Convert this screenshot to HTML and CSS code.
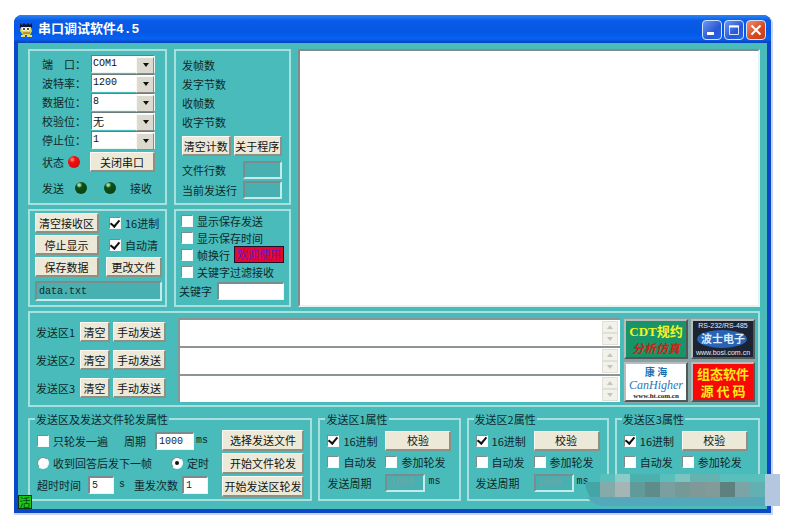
FILE: index.html
```html
<!DOCTYPE html>
<html lang="zh-CN">
<head>
<meta charset="utf-8">
<title>串口调试软件4.5</title>
<link rel="stylesheet" href="styles.css">
</head>
<body>
<main class="window">
  <header class="titlebar">
    <svg class="app-icon" width="14" height="16" viewBox="0 0 14 16" aria-hidden="true">
      <path d="M1 1l2 2 2-2 2 2 2-2 2 2 2-2v5H1z" fill="#10143c"/>
      <path d="M2 5h10l1 4-2 4H4L1 9z" fill="#d8d848"/>
      <circle cx="5" cy="7" r="2" fill="#fff"/><circle cx="9" cy="7" r="2" fill="#fff"/>
      <circle cx="5" cy="7" r="1" fill="#111"/><circle cx="9" cy="7" r="1" fill="#111"/>
      <path d="M4 11h7" stroke="#b04a18" stroke-width="1"/>
      <path d="M2 14h4M8 14h5" stroke="#e8e060" stroke-width="2"/>
    </svg>
    <h1 class="title">串口调试软件4.5</h1>
    <button class="cap" aria-label="最小化"><svg width="18" height="18" viewBox="0 0 18 18"><path d="M4 12.5h7" stroke="#fff" stroke-width="3"/></svg></button>
    <button class="cap" aria-label="最大化"><svg width="18" height="18" viewBox="0 0 18 18"><path d="M4.5 5h9v8.5h-9z" fill="none" stroke="#d4e2ff" stroke-width="1"/><path d="M4 5.5h10" stroke="#fff" stroke-width="2"/></svg></button>
    <button class="cap cap-close" aria-label="关闭"><svg width="18" height="18" viewBox="0 0 18 18"><path d="M4.5 4.5l9 9M13.5 4.5l-9 9" stroke="#fff" stroke-width="2"/></svg></button>
  </header>

  <div class="client">
    <div class="upper">
      <section class="panel port">
        <div class="port-grid">
          <label for="port">端　口：</label><span class="combo"><select id="port"><option>COM1</option></select></span>
          <label for="baud">波特率：</label><span class="combo"><select id="baud"><option>1200</option></select></span>
          <label for="data">数据位：</label><span class="combo"><select id="data"><option>8</option></select></span>
          <label for="parity">校验位：</label><span class="combo"><select id="parity" class="cjk"><option>无</option></select></span>
          <label for="stop">停止位：</label><span class="combo"><select id="stop"><option>1</option></select></span>
        </div>
        <div class="status"><span>状态</span><i class="led led-red"></i><button class="btn">关闭串口</button></div>
        <div class="lamps"><span>发送</span><i class="led"></i><i class="led"></i><span>接收</span></div>
      </section>

      <section class="panel counts">
        <div class="count">发帧数</div>
        <div class="count">发字节数</div>
        <div class="count">收帧数</div>
        <div class="count">收字节数</div>
        <div class="pair"><button class="btn">清空计数</button><button class="btn">关于程序</button></div>
        <div class="line"><label for="rows">文件行数</label><input class="field flat" id="rows" readonly></div>
        <div class="line"><label for="cur">当前发送行</label><input class="field flat" id="cur" readonly></div>
      </section>

      <textarea class="memo" aria-label="接收区"></textarea>

      <section class="panel receive">
        <button class="btn">清空接收区</button><label class="check"><input type="checkbox" checked>16进制</label>
        <button class="btn">停止显示</button><label class="check"><input type="checkbox" checked>自动清</label>
        <button class="btn">保存数据</button><button class="btn">更改文件</button>
        <input class="field flat file" aria-label="文件名" value="data.txt">
      </section>

      <section class="panel filter">
        <label class="check"><input type="checkbox">显示保存发送</label>
        <label class="check"><input type="checkbox">显示保存时间</label>
        <div class="wrapline"><label class="check"><input type="checkbox">帧换行</label><span class="welcome">欢迎使用</span></div>
        <label class="check"><input type="checkbox">关键字过滤接收</label>
        <div class="keyword"><label for="kw">关键字</label><input class="field" id="kw"></div>
      </section>
    </div>

    <section class="panel send">
      <div class="send-rows">
        <div class="send-row"><label for="s1">发送区1</label><button class="btn">清空</button><button class="btn wide">手动发送</button><textarea id="s1"></textarea><span class="scroll"><i></i><i class="down"></i></span></div>
        <div class="send-row"><label for="s2">发送区2</label><button class="btn">清空</button><button class="btn wide">手动发送</button><textarea id="s2"></textarea><span class="scroll"><i></i><i class="down"></i></span></div>
        <div class="send-row"><label for="s3">发送区3</label><button class="btn">清空</button><button class="btn wide">手动发送</button><textarea id="s3"></textarea><span class="scroll"><i></i><i class="down"></i></span></div>
      </div>
      <div class="ads">
        <button class="ad"><svg width="60" height="36" viewBox="0 0 60 36">
          <path d="M0 0h60v36H0z" fill="#189468"/>
          <text x="30" y="15" class="ad-cdt">CDT规约</text>
          <text x="30" y="32" class="ad-sim">分析仿真</text></svg></button>
        <button class="ad"><svg width="60" height="36" viewBox="0 0 60 36">
          <path d="M0 0h60v36H0z" fill="#1c2434"/>
          <ellipse cx="29" cy="18" rx="25" ry="9" fill="#2b62b4"/>
          <text x="30" y="7" class="ad-small">RS-232/RS-485</text>
          <text x="30" y="22" class="ad-boshi">波士电子</text>
          <text x="30" y="34" class="ad-small">www.bosi.com.cn</text></svg></button>
        <button class="ad"><svg width="60" height="36" viewBox="0 0 60 36">
          <path d="M0 0h60v36H0z" fill="#fff"/>
          <text x="30" y="12" class="ad-kh">康 海</text>
          <text x="30" y="25" class="ad-can">CanHigher</text>
          <text x="30" y="34" class="ad-url">www.ht.com.cn</text></svg></button>
        <button class="ad"><svg width="60" height="36" viewBox="0 0 60 36">
          <path d="M0 0h60v36H0z" fill="#f80808"/>
          <text x="30" y="15" class="ad-src">组态软件</text>
          <text x="30" y="32" class="ad-src">源 代 码</text></svg></button>
      </div>
    </section>

    <div class="groups">
      <fieldset class="group poll">
        <legend>发送区及发送文件轮发属性</legend>
        <div class="poll-rows">
          <div class="poll-row"><label class="check"><input type="checkbox">只轮发一遍</label><label for="per" class="period">周期</label><input class="field num4" id="per" value="1000"><span class="unit">ms</span></div>
          <div class="poll-row"><label class="check"><input type="radio" name="mode">收到回答后发下一帧</label><label class="check timed"><input type="radio" name="mode" checked>定时</label></div>
          <div class="poll-row"><label for="tmo">超时时间</label><input class="field num1" id="tmo" value="5"><span class="unit seconds">s</span><label for="rep" class="repeat">重发次数</label><input class="field num1 times" id="rep" value="1"></div>
        </div>
        <div class="poll-btns"><button class="btn">选择发送文件</button><button class="btn">开始文件轮发</button><button class="btn">开始发送区轮发</button></div>
      </fieldset>
      <fieldset class="group area">
        <legend>发送区1属性</legend>
        <label class="check"><input type="checkbox" checked>16进制</label><button class="btn">校验</button>
        <label class="check"><input type="checkbox">自动发</label><label class="check"><input type="checkbox">参加轮发</label>
        <label for="p1">发送周期</label><span class="cycle"><input class="field flat" id="p1" value="1000" disabled><span class="unit">ms</span></span>
      </fieldset>
      <fieldset class="group area">
        <legend>发送区2属性</legend>
        <label class="check"><input type="checkbox" checked>16进制</label><button class="btn">校验</button>
        <label class="check"><input type="checkbox">自动发</label><label class="check"><input type="checkbox">参加轮发</label>
        <label for="p2">发送周期</label><span class="cycle"><input class="field flat" id="p2" value="1000" disabled><span class="unit">ms</span></span>
      </fieldset>
      <fieldset class="group area">
        <legend>发送区3属性</legend>
        <label class="check"><input type="checkbox" checked>16进制</label><button class="btn">校验</button>
        <label class="check"><input type="checkbox">自动发</label><label class="check"><input type="checkbox">参加轮发</label>
      </fieldset>
    </div>
    <span class="badge">活</span>
  </div>

  <svg class="mosaic" width="195" height="32" viewBox="0 0 195 32" aria-hidden="true">
    <path d="M0 8h15v22Q2 26 0 8z" fill="#44a5a5"/>
    <path d="M15 0h165v8H15z" fill="#58bfbd"/>
    <path d="M30 0h15v8H30z" fill="#8accc8"/>
    <path d="M45 0h30v8H45z" fill="#4bb0ae"/>
    <path d="M90 0h15v8H90z" fill="#7cc4c1"/>
    <path d="M105 0h30v8h-30z" fill="#65b3b1"/>
    <path d="M15 8h15v15H15z" fill="#5ebdbe"/>
    <path d="M15 8h15v15H15z" fill="#84aaa9"/>
    <path d="M30 8h15v15H30z" fill="#a5b5b5"/>
    <path d="M45 8h15v15H45z" fill="#609a99"/>
    <path d="M60 8h15v15H60z" fill="#5d8c8b"/>
    <path d="M75 8h15v15H75z" fill="#7b9f9e"/>
    <path d="M90 8h15v15H90z" fill="#759997"/>
    <path d="M105 8h15v15h-15z" fill="#7e9997"/>
    <path d="M120 8h15v15h-15z" fill="#829b99"/>
    <path d="M135 8h15v15h-15z" fill="#5e807f"/>
    <path d="M150 8h15v15h-15z" fill="#7ca3a5"/>
    <path d="M165 8h15v15h-15z" fill="#63b0b2"/>
    <path d="M2 23h178v9H20Q8 32 2 23z" fill="#54a8bb"/>
    <path d="M180 0h15v32h-15z" fill="#b3c8df"/>
  </svg>
</main>
</body>
</html>
```
FILE: styles.css
```css
* { box-sizing: border-box; }

body {
  margin: 0;
  padding: 15px 41px 6px 14px;
  background: #fff;
  color: #10282a;
  font: 11px/16px "Noto Sans CJK SC", sans-serif;
}

button, input, select, textarea {
  margin: 0;
  padding: 0;
  font: inherit;
  color: inherit;
  border-radius: 0;
}

.window {
  position: relative;
  border-radius: 8px 8px 0 0;
  background: #0a48c8;
  box-shadow: 1px 1px 0 1px #c8d4f0;
}

/* Title bar */
.titlebar {
  display: flex;
  align-items: center;
  gap: 2px;
  height: 28px;
  padding: 2px 5px 0;
  border-radius: 8px 8px 0 0;
  background: linear-gradient(#2a86f4, #0a5ce8 20%, #0458e4 60%, #0662f4 85%, #0440b8);
}

.title {
  flex: 1;
  margin: 0 0 0 3px;
  color: #fff;
  font: bold 13px/20px "Liberation Mono", "Noto Sans CJK SC", monospace;
}

.cap {
  display: flex;
  width: 20px;
  height: 20px;
  border: 1px solid #d4e2fc;
  border-radius: 4px;
  background: linear-gradient(135deg, #6c98f4, #2858d4 60%, #2a64e4);
}

.cap-close { background: linear-gradient(135deg, #f09070, #d84820 60%, #c04018); }

/* Client area */
.client {
  position: relative;
  display: flex;
  flex-direction: column;
  gap: 4px;
  margin: 0 4px;
  padding: 6px 7px 8px 10px;
  background: #48bbba;
}

.window::after {
  content: "";
  display: block;
  height: 4px;
}

.panel, .group {
  border: 2px solid #a9e0de;
  min-width: 0;
}

.upper {
  display: grid;
  grid-template-columns: 139px 117px 1fr;
  grid-template-rows: 156px 98px;
  gap: 4px 7px;
}

.memo {
  grid-column: 3;
  grid-row: 1 / 3;
  resize: none;
  border: 2px solid #e4f4f2;
  border-top-color: #808c8c;
  border-left-color: #808c8c;
  background: #fff;
}

.receive, .filter { grid-row: 2; }

.btn {
  height: 20px;
  border: 1px solid #fbfaf4;
  border-right: 2px solid #8f8f84;
  border-bottom: 2px solid #8f8f84;
  background: #ece9d8;
  color: #111;
  line-height: 16px;
  white-space: nowrap;
}

.field {
  height: 18px;
  min-width: 0;
  padding: 0 2px;
  border: 1px solid #e8f6f4;
  border-top: 2px solid #7c8c8c;
  border-left: 2px solid #7c8c8c;
  background: #fff;
  font: 10px/14px "Liberation Mono", monospace;
}

.flat {
  background: #48b0b0;
  border-right: 2px solid #c4ecea;
  border-bottom: 2px solid #c4ecea;
}

.flat:disabled { color: #74a4a4; }

/* Tick boxes and radios */
.check {
  display: flex;
  align-items: center;
  gap: 4px;
  white-space: nowrap;
}

.check input {
  appearance: none;
  display: grid;
  place-items: center;
  flex: none;
  width: 12px;
  height: 12px;
  border: 1px solid #f4faf8;
  border-top-color: #7c8c8c;
  border-left-color: #7c8c8c;
  background: #fff;
}

.check input[type="checkbox"]:checked::before {
  content: "";
  width: 4px;
  height: 7px;
  margin-top: -2px;
  border: solid #111;
  border-width: 0 2px 2px 0;
  transform: rotate(40deg);
}

.check input[type="radio"] { border-radius: 50%; }

.check input[type="radio"]:checked::before {
  content: "";
  width: 4px;
  height: 4px;
  border-radius: 50%;
  background: #111;
}

/* Port settings */
.port { padding: 4px 10px 0 12px; }

.port-grid {
  display: grid;
  grid-template-columns: 49px 1fr;
  grid-auto-rows: 18px;
  row-gap: 1px;
  align-items: center;
  white-space: nowrap;
}

.combo {
  position: relative;
  display: flex;
}

.combo select {
  appearance: none;
  width: 100%;
  height: 18px;
  padding: 0 16px 0 1px;
  border: 1px solid #e8f6f4;
  border-top-color: #6c7c7c;
  border-left-color: #6c7c7c;
  background: #fff;
  color: #111;
  font: 10px/16px "Liberation Mono", monospace;
}

.combo .cjk { font: 11px/16px "Noto Sans CJK SC", sans-serif; }

.combo::before {
  content: "";
  position: absolute;
  top: 2px;
  right: 1px;
  width: 16px;
  height: 15px;
  border: 1px solid #f8f8f4;
  border-right-color: #8c8c84;
  border-bottom-color: #8c8c84;
  background: #dcdace;
  pointer-events: none;
}

.combo::after {
  content: "";
  position: absolute;
  top: 8px;
  right: 6px;
  border: 3px solid transparent;
  border-top: 4px solid #111;
  border-bottom: 0;
  pointer-events: none;
}

.status {
  display: flex;
  align-items: center;
  gap: 4px;
  margin-top: 3px;
}

.status .btn {
  flex: 1;
  margin-left: 6px;
}

.lamps {
  display: flex;
  align-items: center;
  gap: 11px;
  margin-top: 8px;
}

.lamps .led + .led { margin: 0 3px 0 6px; }

.led {
  width: 12px;
  height: 12px;
  border-radius: 50%;
  background: radial-gradient(circle at 35% 25%, #a8d8a8 0 1px, #0c5018 3px, #063c10);
}

.led-red { background: radial-gradient(circle at 35% 30%, #ff7060 0 1px, #f01010 3px, #c80808); }

/* Counters */
.counts { padding: 5px 7px 0 6px; }
.count { height: 19px; line-height: 19px; }

.pair {
  display: grid;
  grid-template-columns: 1fr 1fr;
  gap: 3px;
  margin: 4px 0;
}

.line {
  display: flex;
  align-items: center;
  justify-content: space-between;
  height: 20px;
}

.line .field { width: 39px; }

/* Receive options */
.receive {
  display: grid;
  grid-template-columns: 64px 56px;
  grid-auto-rows: 20px;
  gap: 2px 7px;
  padding: 2px 4px 0 5px;
}

.receive .check { padding-left: 3px; }

.receive .file {
  grid-column: 1 / 3;
  height: 20px;
  margin-top: 2px;
}

.filter { padding: 1px 5px 0 5px; }
.filter .check { height: 17px; }

.wrapline {
  display: flex;
  justify-content: space-between;
}

.welcome {
  height: 17px;
  padding: 0 2px;
  border: 1px solid #201030;
  background: #e40828;
  color: #6418d0;
  line-height: 15px;
}

.keyword {
  display: flex;
  align-items: center;
  gap: 5px;
  margin: 2px 0 0 -2px;
}

.keyword .field { flex: 1; }

/* Send areas */
.send {
  display: flex;
  gap: 3px;
  padding: 5px 2px 2px 6px;
}

.send-rows {
  flex: 1;
  min-width: 0;
}

.send-row {
  display: flex;
  align-items: center;
  height: 28px;
}

.send-row label { width: 44px; }
.send-row .btn { width: 30px; margin-right: 3px; }
.send-row .wide { width: 53px; margin-right: 12px; }

.send-row textarea {
  flex: 1;
  min-width: 0;
  height: 28px;
  resize: none;
  border: 0;
  border-top: 2px solid #8c9494;
  border-left: 2px solid #8c9494;
  background: #fff;
}

.scroll {
  display: grid;
  width: 18px;
  height: 28px;
  padding: 1px 2px 1px 0;
  border-top: 2px solid #8c9494;
  background: #fff;
}

.scroll i {
  display: grid;
  place-items: center;
  border: 1px solid #e0e0d8;
  background: #f2f1ea;
}

.scroll i::before {
  content: "";
  border: 3px solid transparent;
  border-bottom: 4px solid #c4c4bc;
  border-top: 0;
}

.scroll .down::before { transform: rotate(180deg); }

.ads {
  display: grid;
  grid-template-columns: 64px 64px;
  grid-auto-rows: 40px;
  gap: 3px;
  padding: 1px;
  background: #84a4a6;
}

.ad {
  display: flex;
  border: 2px solid #b8bcbc;
  border-right-color: #505858;
  border-bottom-color: #505858;
  background: #84a4a6;
}

.ad text { text-anchor: middle; }
.ad-cdt { fill: #f4f420; font: bold 13px "Liberation Serif", "Noto Sans CJK SC", serif; }
.ad-sim { fill: #d02010; font: italic bold 12px "Noto Sans CJK SC", sans-serif; }
.ad-small { fill: #e4ecf4; font: 7px "Liberation Sans", sans-serif; }
.ad-boshi { fill: #d8ecff; font: bold 11px "Noto Sans CJK SC", sans-serif; }
.ad-kh { fill: #1870b0; font: bold 10px "Noto Sans CJK SC", sans-serif; }
.ad-can { fill: #2878b8; font: italic 12px "Liberation Serif", serif; }
.ad-url { fill: #222; font: bold 7px "Liberation Serif", serif; }
.ad-src { fill: #ffe818; font: bold 13px "Noto Sans CJK SC", sans-serif; }

/* Property groups */
.groups {
  display: grid;
  grid-template-columns: 284fr 142fr 142fr 145fr;
  gap: 6px;
}

.group {
  height: 90px;
  margin: 0;
  padding: 3px 6px 0 7px;
}

.group legend {
  height: 16px;
  padding: 0 1px;
  margin-left: -2px;
  white-space: nowrap;
}

.poll {
  display: flex;
  justify-content: space-between;
}

.poll-row {
  display: flex;
  align-items: center;
  height: 22px;
  white-space: nowrap;
}

.poll-btns {
  display: grid;
  grid-template-columns: 82px;
  grid-auto-rows: 21px;
  gap: 2px;
}

.poll-btns .btn { height: 21px; }
.unit { font: 10px/16px "Liberation Mono", monospace; margin-left: 2px; }
.period { margin: 0 9px 0 16px; }
.num4 { width: 39px; }
.timed { margin-left: 19px; }
.num1 { width: 26px; margin-left: 7px; }
.seconds { margin-left: 5px; }
.repeat { margin-left: 9px; }
.times { margin-left: 4px; }

.area {
  display: grid;
  grid-template-columns: 58px 66px;
  grid-auto-rows: 21px;
  align-items: center;
  align-content: start;
}

.area .unit { margin-left: 3px; }
.cycle { display: flex; }
.cycle .field { width: 40px; }

.badge {
  position: absolute;
  left: 0;
  bottom: 0;
  width: 14px;
  height: 14px;
  border: 1px solid #083808;
  background: #18c818;
  color: #064806;
  line-height: 12px;
  text-align: center;
}

.mosaic {
  position: absolute;
  right: -9px;
  bottom: 7px;
}
```
